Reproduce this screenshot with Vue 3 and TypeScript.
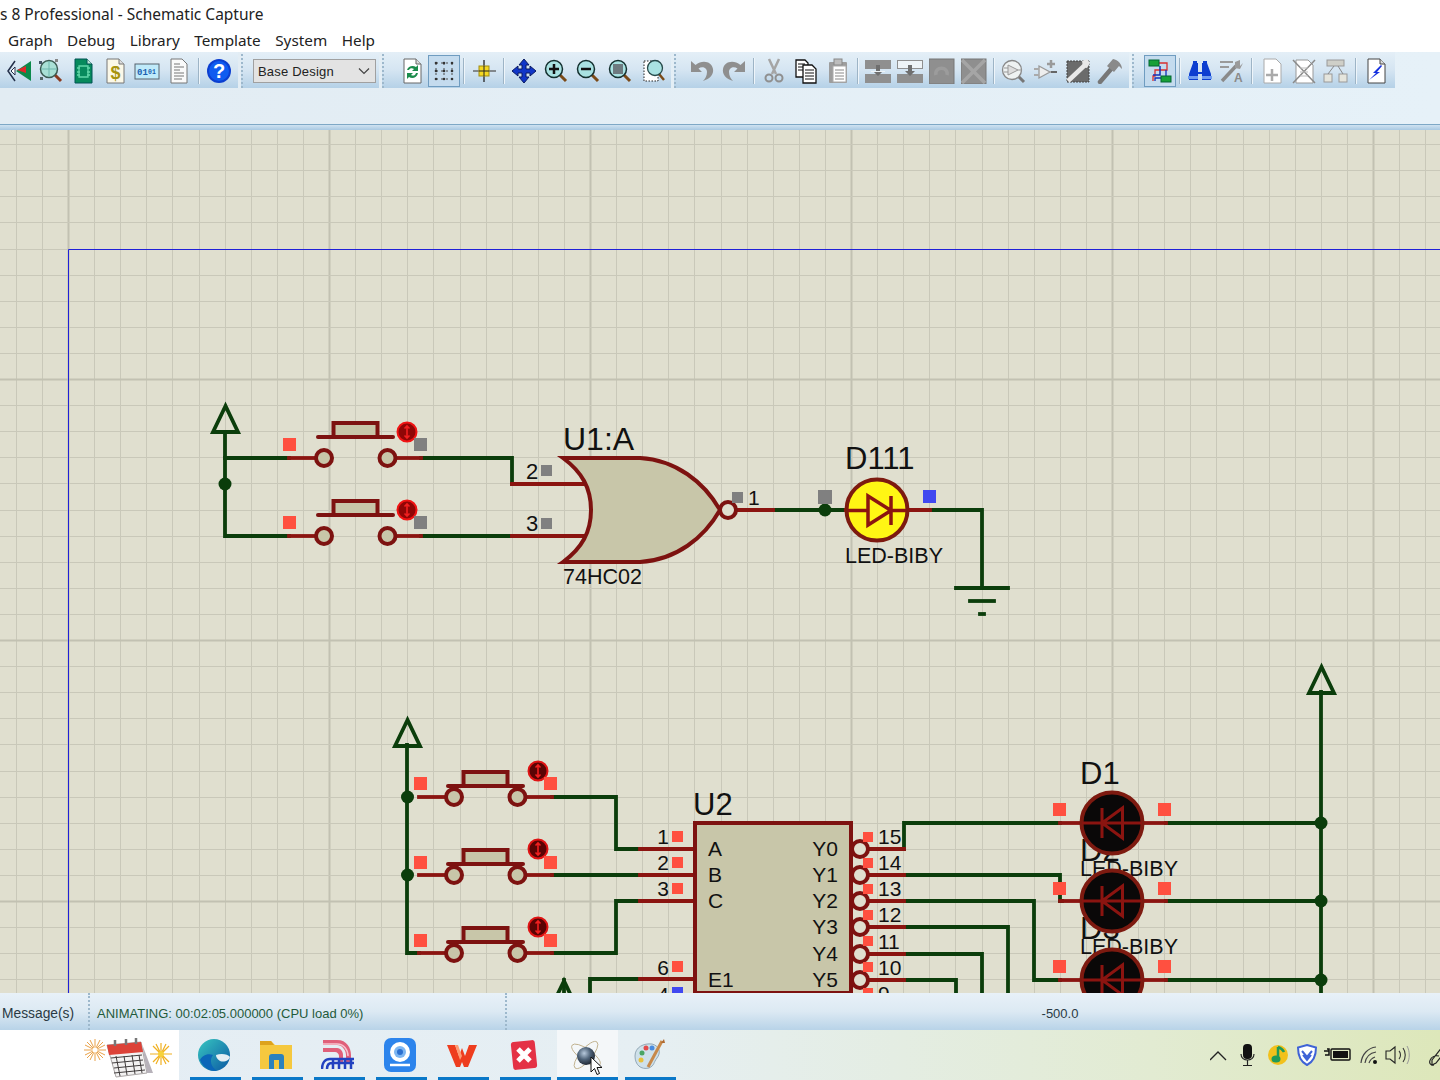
<template>
  <div class="window">
    <div class="title-bar">s 8 Professional - Schematic Capture</div>
    <nav class="menu-bar">
      <span v-for="m in menus" :key="m">{{ m }}</span>
    </nav>
    <div class="tool-area">
      <div class="tool-row">
        <div v-for="(bar, b) in toolbars" :key="b" class="toolbar">
          <span v-if="bar.grip" class="grip" :style="{ width: bar.grip + 'px' }"></span>
          <template v-for="(item, i) in bar.items" :key="i">
            <span v-if="item === 'sep'" class="sep"></span>
            <span v-else-if="item === 'gap'" class="gap"></span>
            <div v-else-if="item === 'combo'" class="combo">
              <span>Base Design</span>
              <svg width="12" height="8" viewBox="0 0 12 8"><path d="M1 1.5 6 6.5 11 1.5" fill="none" stroke="#444" stroke-width="1.2" /></svg>
            </div>
            <span v-else class="tool" :class="{ active: item === 'grid' || item === 'netlist' }">
              <svg width="26" height="26" viewBox="0 0 26 26" v-html="icons[item]"></svg>
            </span>
          </template>
        </div>
      </div>
    </div>
    <div class="rule"></div>

    <main class="canvas">
      <svg class="sheet" width="1440" height="863" viewBox="0 130 1440 863">
        <line v-for="x in gridX" :key="'x' + x.p" :x1="x.p" :x2="x.p" y1="130" y2="993" :class="x.major ? 'g-major' : 'g-minor'" />
        <line v-for="y in gridY" :key="'y' + y.p" x1="0" x2="1440" :y1="y.p" :y2="y.p" :class="y.major ? 'g-major' : 'g-minor'" />
        <path d="M68.5 993V249.5H1440" class="border" />

        <text v-for="t in behindLabels" :key="t.s + t.y" :x="t.x" :y="t.y" :font-size="t.size" class="lbl">{{ t.s }}</text>

        <polyline v-for="(p, i) in greenWires" :key="'g' + i" :points="p" class="wire green" />
        <polyline v-for="(p, i) in redWires" :key="'r' + i" :points="p" class="wire red" />
        <path v-for="(a, i) in arrows" :key="'a' + i" :d="`M${a.x} ${a.y}l-12.500 26h25z`" class="arrow" />
        <circle v-for="(j, i) in junctions" :key="'j' + i" :cx="j[0]" :cy="j[1]" r="6.500" class="junction" />

        <g v-for="(s, i) in switches" :key="'s' + i">
          <path :d="`M${s.x - 6} ${s.y - s.lift}h75`" class="pin" />
          <rect :x="s.x + 9.500" :y="s.y - s.lift - 14" width="44" height="14" class="body" />
          <circle :cx="s.x" :cy="s.y" r="8" class="body" />
          <circle :cx="s.x + 63.500" :cy="s.y" r="8" class="body" />
        </g>
        <g v-for="(k, i) in knobs" :key="'k' + i">
          <circle :cx="k.x" :cy="k.y" r="9.500" :class="k.dark ? 'knob-dark' : 'knob'" />
          <path :d="`M${k.x} ${k.y - 6}v12M${k.x - 2.500} ${k.y - 3.500}l2.500-2.500 2.500 2.500M${k.x - 2.500} ${k.y + 3.500}l2.500 2.500 2.500-2.500`" class="knob-mark" />
        </g>

        <path d="M563 458H640C676 460 704 482 720 510C704 538 676 560 640 562H563C582 548 591 532 591 510C591 488 582 472 563 458Z" class="body" />
        <circle cx="728" cy="510" r="8" class="bubble" />
        <path d="M695 823H851V993H695Z" class="body" />
        <circle v-for="y in bubblesY" :key="'b' + y" cx="860" :cy="y" r="8" class="bubble" />

        <g>
          <circle cx="877" cy="510" r="30.500" class="led-on" />
          <path d="M868 496 891 510.500 868 525ZM891 496V525M848 510.500H868M891 510.500H906" class="diode" />
          <circle v-for="y in [823, 901, 980]" :key="'l' + y" cx="1112" :cy="y" r="30.500" class="led-off" />
          <path v-for="y in [823, 901, 980]" :key="'d' + y" :d="`M1122.500 ${y - 15}V${y + 15}L1102 ${y}ZM1102 ${y - 15}V${y + 15}M1082 ${y}H1142`" class="diode thin" />
        </g>

        <rect v-for="(q, i) in markers" :key="'m' + i" :x="q.x" :y="q.y" :width="q.s" :height="q.s" :fill="q.c" />
        <text v-for="t in labels" :key="t.s + t.x + t.y" :x="t.x" :y="t.y" :font-size="t.size" :text-anchor="t.end ? 'end' : 'start'" class="lbl">{{ t.s }}</text>
      </svg>
    </main>

    <footer class="status-bar">
      <span class="msg">Message(s)</span>
      <span class="grip status-grip"></span>
      <span class="anim">ANIMATING: 00:02:05.000000 (CPU load 0%)</span>
      <span class="grip status-grip second"></span>
      <span class="coord">-500.0</span>
    </footer>

    <div class="taskbar">
      <div class="task-start">
        <svg width="90" height="44" viewBox="0 0 90 44">
          <g stroke="#e9a24a" stroke-width="1">
            <path d="M12 4V26M1 15H23M4 7 20 23M20 7 4 23M7 5 17 25M17 5 7 25M2 10 22 20M22 10 2 20" />
          </g>
          <circle cx="12" cy="15" r="2.500" fill="#fff" />
          <g stroke="#f0b020" stroke-width="1.200">
            <path d="M78 8V30M67 19H89M70 11 86 27M86 11 70 27M73 9 83 29M83 9 73 29" />
          </g>
          <circle cx="78" cy="19" r="3" fill="#f6d23c" />
          <path d="M24 10 58 7 64 38 33 42Z" fill="#f3f2f2" stroke="#a9a4a4" />
          <path d="M24 10 58 7 60 17 26 20Z" fill="#dc4238" />
          <path d="M59 9 70 38H64Z" fill="#b7b2ba" />
          <path d="M28 23 59 20M29 28 60 25M31 33 61 30M31 38 62 35M33 21 37 41M41 21 44 40M49 20 52 39M56 20 59 38" stroke="#403c3c" stroke-width="1" fill="none" />
          <path d="M32 11V5M43 10V4M53 9V3" stroke="#777" stroke-width="2.500" fill="none" />
        </svg>
      </div>
      <div class="task-apps">
        <span v-for="app in apps" :key="app" class="app" :class="app">
          <svg width="34" height="34" viewBox="0 0 34 34" v-html="appIcons[app]"></svg>
        </span>
      </div>
      <div class="tray">
        <svg width="230" height="26" viewBox="0 0 230 26">
          <path d="M0 18 8 10 16 18" fill="none" stroke="#222" stroke-width="1.300" />
          <rect x="33" y="2" width="9" height="15" rx="4" fill="#111" />
          <path d="M31 12C31 20 44 20 44 12M37.500 18V23M33 23.500H42" fill="none" stroke="#222" stroke-width="1.200" />
          <circle cx="68" cy="13" r="10" fill="#f2c11c" />
          <path d="M68 5V16M68 5C71 6 73 8 74 10" fill="none" stroke="#1f9a58" stroke-width="2.500" />
          <ellipse cx="66" cy="17" rx="4.500" ry="3.500" fill="#1f9a58" />
          <path d="M97 3 106 5.500C106 15 103 20 97 23 91 20 88 15 88 5.500Z" fill="#fff" stroke="#3f63d6" stroke-width="2" />
          <path d="M92 9 97 15 102 9M93 13 97 18 101 13" fill="none" stroke="#3f63d6" stroke-width="2" />
          <rect x="121" y="7" width="19" height="11" rx="1" fill="none" stroke="#111" stroke-width="1.400" />
          <rect x="123" y="9" width="15" height="7" fill="#111" />
          <path d="M114 9H119M115 13H119V7H117" stroke="#111" stroke-width="1.500" fill="none" />
          <path d="M151 21C152 12 158 6 166 5M155 21C156 15 160 11 166 10M159 21C160 18 162 16 165 15" fill="none" stroke="#444" stroke-width="1.200" />
          <circle cx="165" cy="20" r="2" fill="#111" />
          <path d="M176 9H180L185 5V21L180 17H176Z" fill="none" stroke="#222" stroke-width="1.100" />
          <path d="M189 9C191 11 191 15 189 17M193 6C196 10 196 16 193 20" fill="none" stroke="#333" stroke-width="1.100" />
          <path d="M197 4C200 9 200 17 197 22" fill="none" stroke="#999" stroke-width="1" />
          <path d="M222 18 233 4 237 7 226 21 222 23ZM229 14C220 12 216 24 224 23" fill="none" stroke="#222" stroke-width="1.200" />
        </svg>
      </div>
      <svg class="cursor" width="14" height="20" viewBox="0 0 14 20">
        <path d="M1 1V16L4.500 12.500 7 18.500 9.500 17.500 7 11.500H12Z" fill="#fff" stroke="#111" stroke-width="1" />
      </svg>
    </div>
  </div>
</template>

<script setup lang="ts">
interface Label {
  s: string
  x: number
  y: number
  size: number
  end?: boolean
}

const menus = ['Graph', 'Debug', 'Library', 'Template', 'System', 'Help']

const toolbars: { grip: number; items: string[] }[] = [
  { grip: 3, items: ['back', 'zoomGreen', 'chipDoc', 'dollar', 'binary', 'textDoc', 'sep', 'help'] },
  { grip: 12, items: ['combo'] },
  { grip: 14, items: ['refresh', 'grid', 'sep', 'origin', 'sep', 'move', 'zoomIn', 'zoomOut', 'zoomAll', 'gap', 'zoomArea'] },
  { grip: 12, items: ['undo', 'redo', 'sep', 'cut', 'copy', 'paste', 'sep', 'blockCopy', 'blockMove', 'blockRotate', 'blockDelete', 'sep', 'pick', 'device', 'chipTool', 'hammer'] },
  { grip: 12, items: ['netlist', 'sep', 'find', 'autoName', 'sep', 'newSheet', 'delSheet', 'tree', 'sep', 'bolt'] }
]

const teal = '#a9e2e2'
const lens = (fill: string, inner: string, edge = '#14302f', handle = '#7a4a18') =>
  `<path d="M17 17l6 6" stroke="${handle}" stroke-width="3"/><circle cx="11" cy="11" r="8.500" fill="${fill}" stroke="${edge}" stroke-width="1.500"/>${inner}`
const gray = '#8f8f8f'

const icons: Record<string, string> = {
  back: `<path d="M9 3 2 13 9 23" fill="none" stroke="#24304a" stroke-width="1.500"/><path d="M5 13 9 9V17Z" fill="#fff" stroke="#24304a"/><path d="M10 13 25 3V23Z" fill="#0b8a4b"/><path d="M11 12 20 8V15Z" fill="#e0282a"/>`,
  zoomGreen: lens('#a9e0d6', `<path d="M11 3V19M3 11H19" stroke="#6fb7ae"/><rect x="1" y="3" width="3" height="3" fill="#456"/><rect x="17" y="1" width="3" height="3" fill="#888"/><rect x="2" y="19" width="3" height="3" fill="#566"/>`, '#3b5a52', '#8a3a20'),
  chipDoc: `<path d="M5 1H17L22 6V25H5Z" fill="#078a5c" stroke="#055"/><path d="M17 1V6H22" fill="#bfe6d6" stroke="#055"/><path d="M9 8H18V19H9ZM7 10H10M7 14H10M7 17H10M17 10H20M17 14H20M17 17H20" fill="none" stroke="#62d6a8" stroke-width="1.300"/>`,
  dollar: `<path d="M5 1H17L22 6V25H5Z" fill="#fbf8e8" stroke="#777"/><path d="M17 1V6H22" fill="#ddd" stroke="#777"/><text x="13.500" y="21" font-size="18" font-weight="700" text-anchor="middle" fill="#a89410" font-family="Liberation Sans, sans-serif">$</text>`,
  binary: `<rect x="1" y="6" width="24" height="15" fill="#bfeafa" stroke="#56626c"/><text x="3" y="17" font-size="9" font-weight="700" fill="#1a5fb0" font-family="Liberation Mono, monospace">01</text><text x="14" y="16" font-size="6.500" font-weight="700" fill="#1a5fb0" font-family="Liberation Mono, monospace">01</text>`,
  textDoc: `<path d="M5 1H16L21 6V25H5Z" fill="#fafafa" stroke="#777"/><path d="M8 6H14M8 9H18M8 12H14M8 15H18M8 18H18M8 21H16" stroke="#777"/>`,
  help: `<circle cx="13" cy="13" r="12" fill="#0b3ed0"/><circle cx="13" cy="13" r="10" fill="#0f5cf0"/><text x="13" y="20" font-size="20" font-weight="700" text-anchor="middle" fill="#fff" font-family="Liberation Sans, sans-serif">?</text>`,
  refresh: `<path d="M5 1H17L22 6V25H5Z" fill="#fff" stroke="#666"/><path d="M17 1V6H22" fill="#ddd" stroke="#666"/><path d="M8 12C9 8 14 7 17 9L19 7V13H13L15 11C13 10 11 10 10 12ZM19 15C18 20 13 21 10 19L8 21V15H14L12 17C14 18 16 18 17 15Z" fill="#1c8c4c"/>`,
  grid: `<g stroke="#4d4d4d" fill="#444"><path d="M5 5H21M5 13H21M5 21H21M5 5V21M13 5V21M21 5V21" stroke-dasharray="2 3" stroke-width="1"/></g><g fill="#333"><circle cx="5" cy="5" r="1.300"/><circle cx="13" cy="5" r="1.300"/><circle cx="21" cy="5" r="1.300"/><circle cx="5" cy="13" r="1.300"/><circle cx="13" cy="13" r="1.300"/><circle cx="21" cy="13" r="1.300"/><circle cx="5" cy="21" r="1.300"/><circle cx="13" cy="21" r="1.300"/><circle cx="21" cy="21" r="1.300"/></g>`,
  origin: `<path d="M13 2V24" stroke="#222" stroke-width="1.300"/><path d="M2 13H25" stroke="#555" stroke-width="1.300"/><rect x="8" y="8" width="10" height="10" fill="#f5d820" stroke="#a08c14"/><path d="M13 8V18M8 13H18" stroke="#222"/>`,
  move: `<path d="M13 1 18 7H15V11H19V8L25 13 19 18V15H15V19H18L13 25 8 19H11V15H7V18L1 13 7 8V11H11V7H8Z" fill="#1136c8" stroke="#0a1a60"/>`,
  zoomIn: lens(teal, `<path d="M11 6V16M6 11H16" stroke="#111" stroke-width="2.500"/>`),
  zoomOut: lens(teal, `<path d="M6 11H16" stroke="#111" stroke-width="2.500"/>`),
  zoomAll: lens(teal, `<rect x="6" y="6" width="10" height="10" fill="#6e7a80"/>`),
  zoomArea: `<rect x="3" y="3" width="14" height="20" fill="#fff" stroke="#222" stroke-dasharray="1.500 1.500"/><path d="M18 16l5 6" stroke="#7a4a18" stroke-width="2.500"/><circle cx="14" cy="10" r="7.500" fill="${teal}" stroke="#26494a" stroke-width="1.300"/>`,
  undo: `<path d="M2 3V14H13L9.500 10.500C13 8 18 9.500 18 14 18 18 16 21 14 23 21 21 25 16 24 11 23 4 14 1 6.500 7Z" fill="${gray}"/>`,
  redo: `<path d="M24 3V14H13L16.500 10.500C13 8 8 9.500 8 14 8 18 10 21 12 23 5 21 1 16 2 11 3 4 12 1 19.500 7Z" fill="${gray}"/>`,
  cut: `<path d="M8 1 15 16M18 1 11 16" stroke="#a5a5a5" stroke-width="2.500"/><circle cx="8" cy="20" r="3.500" fill="none" stroke="${gray}" stroke-width="2"/><circle cx="18" cy="20" r="3.500" fill="none" stroke="${gray}" stroke-width="2"/>`,
  copy: `<path d="M3 2H12L15 5V19H3Z" fill="#fff" stroke="#111" stroke-width="1.300"/><path d="M5 6H12M5 9H12M5 12H12" stroke="#111"/><path d="M10 7H19L23 11V25H10Z" fill="#fff" stroke="#111" stroke-width="1.300"/><path d="M12 12H21M12 15H21M12 18H21M12 21H21" stroke="#111"/>`,
  paste: `<rect x="4" y="4" width="18" height="21" rx="1" fill="#9d9d9d"/><rect x="9" y="1" width="8" height="6" fill="#bdbdbd" stroke="#888"/><path d="M8 8H21V24H8Z" fill="#fff" stroke="#aaa"/><path d="M10 12H19M10 15H19M10 18H19M10 21H19" stroke="#888"/>`,
  blockCopy: `<rect y="2" width="26" height="9" fill="${gray}"/><rect y="16" width="26" height="9" fill="${gray}"/><path d="M11 7H15V13H18L13 18 8 13H11Z" fill="#6f6f6f"/><path d="M6 13.500H20" stroke="#eef3f6"/>`,
  blockMove: `<rect x=".5" y="2.500" width="25" height="8" fill="#eef3f6" stroke="${gray}"/><rect y="16" width="26" height="9" fill="${gray}"/><path d="M11 7H15V13H18L13 18 8 13H11Z" fill="#6f6f6f"/>`,
  blockRotate: `<rect y="1" width="25" height="25" fill="${gray}" stroke="#777"/><path d="M7 17C5 8 20 8 18 17" fill="none" stroke="#9c9c9c" stroke-width="3.500"/>`,
  blockDelete: `<rect y="1" width="25" height="25" fill="${gray}" stroke="#777"/><path d="M1 2 24 25M24 2 1 25" stroke="#a5a5a5" stroke-width="3.500"/>`,
  pick: `<path d="M17 18l6 6" stroke="#777" stroke-width="3"/><circle cx="11" cy="12" r="9.500" fill="#eef2f2" stroke="#888" stroke-width="1.300"/><path d="M7 7V17L17 12Z" fill="#ddd" stroke="#999"/><path d="M3 10H7M3 14H7M17 12H21" stroke="#999"/>`,
  device: `<path d="M6 8V20L17 14Z" fill="#eee" stroke="#999" stroke-width="1.300"/><path d="M1 11H6M1 17H6M17 14H22" stroke="#aaa" stroke-width="2"/><path d="M18 2V10M14 6H22" stroke="#9a9a9a" stroke-width="2.500"/><path d="M18 14H24" stroke="#666" stroke-width="2"/>`,
  chipTool: `<rect x="2" y="3" width="22" height="21" fill="#6b6b6b" stroke-dasharray="2 1" stroke="#444"/><path d="M3 23 20 7" stroke="#e8e8e8" stroke-width="4.500"/><path d="M17 3 22 1 25 5 22 10 18 9Z" fill="#e8e8e8"/>`,
  hammer: `<path d="M3 24 15 10" stroke="#777" stroke-width="4.500" stroke-linecap="round"/><path d="M10 8 16 1C21 2 25 6 25 11L22 8 17 14Z" fill="#8a8a8a"/>`,
  netlist: `<path d="M9 5H20V12H8V18H6V23" fill="none" stroke="#d83030" stroke-width="1.300"/><path d="M13 8V17H6" fill="none" stroke="#1130b8" stroke-width="1.500"/><path d="M19 12V20H8V23" fill="none" stroke="#1130b8" stroke-width="1.300"/><rect x="2" y="2" width="10" height="6" fill="#18a038" stroke="#063"/><rect x="14" y="18" width="10" height="6" fill="#18a038" stroke="#063"/>`,
  find: `<path d="M2 16 6 5H11V14H15V5H20L24 16V22H15V16H11V22H2Z" fill="#0d3ed0"/><rect x="1" y="18" width="10" height="3" fill="#6f9cf0"/><rect x="15" y="18" width="10" height="3" fill="#6f9cf0"/><rect x="6" y="3" width="4" height="3" fill="#0d3ed0"/><rect x="16" y="3" width="4" height="3" fill="#0d3ed0"/>`,
  autoName: `<path d="M1 4H14M1 9H10" stroke="#9a9a9a" stroke-width="2"/><path d="M3 23 17 8" stroke="#8a8a8a" stroke-width="3.500"/><path d="M16 4 21 2 21 8 24 5 21 11 16 10Z" fill="#9a9a9a"/><text x="15" y="24" font-size="12" font-weight="700" fill="#8a8a8a" font-family="Liberation Sans, sans-serif">A</text>`,
  newSheet: `<path d="M5 1H17L22 6V25H5Z" fill="#fff" stroke="#aaa"/><path d="M13 11V23M7 17H19" stroke="#aaa" stroke-width="2.500"/>`,
  delSheet: `<path d="M5 2H17L22 7V25H5Z" fill="#fff" stroke="#999"/><path d="M2 2 24 25M24 2 2 25" stroke="#8a8a8a" stroke-width="1.500"/><path d="M9 10H17M9 14H17M9 18H17" stroke="#bbb"/>`,
  tree: `<rect x="4" y="2" width="17" height="6" fill="#cfcfc8" stroke="#999"/><rect x="1" y="16" width="8" height="8" fill="#e5e5dd" stroke="#999"/><rect x="16" y="16" width="8" height="8" fill="#e5e5dd" stroke="#999"/><path d="M11 8 5 16M15 8 20 16" stroke="#888"/>`,
  bolt: `<path d="M5 1H17L22 6V25H5Z" fill="#fff" stroke="#444"/><path d="M17 1V6H22" fill="#ddd" stroke="#444"/><path d="M18 7 10 15H13L6 22 17 14H14L19 8Z" fill="#1530e0"/>`
}

const apps = ['edge', 'folder', 'rails', 'cam', 'wps', 'xmind', 'atom', 'paint']

const appIcons: Record<string, string> = {
  edge: `<defs><linearGradient id="edgeG" x1="0" y1="0" x2="1" y2="1"><stop offset="0" stop-color="#37c6c0"/><stop offset="1" stop-color="#0c59a4"/></linearGradient></defs><circle cx="17" cy="17" r="16" fill="url(#edgeG)"/><path d="M19 17C24 15 31 16 33 19 31 24 26 24 23 23 20 21 19 19 19 17Z" fill="#e4eef3"/><path d="M3 22C6 30 13 33 20 33 14 29 12 22 16 17 10 15 5 18 3 22Z" fill="#0b66b8"/>`,
  folder: `<path d="M1 8V5C1 3 2 3 3 3H12L16 7H33V31H1Z" fill="#f5c83f"/><path d="M1 3H12L15 7H1Z" fill="#dda21d"/><path d="M10 31V19C10 17 11 16 13 16H22C24 16 25 17 25 19V31H20V22H15V31Z" fill="#2c81bd"/>`,
  rails: `<path d="M2 2H16C26 2 30 10 30 17V26H25V17C25 12 21 7 16 7H2ZM2 10H16C20 10 22 14 22 17V26H18V18C18 16 16 14 14 14H2Z" fill="#e0607a"/><path d="M2 6H16C23 6 27 12 27 18" fill="none" stroke="#f7c3cf" stroke-width="1.500"/><path d="M1 31C1 25 4 21 9 21H33M6 31C6 27 8 25 11 25H33M12 31V21M18 31V21M24 31V21M30 31V21" fill="none" stroke="#2242c0" stroke-width="2.500"/>`,
  cam: `<rect x="1" y="0" width="32" height="34" rx="7" fill="#2c84ec"/><circle cx="17" cy="14" r="10" fill="#fff"/><circle cx="17" cy="14" r="6" fill="#7db6f2"/><circle cx="17" cy="14" r="3" fill="#2c70d0"/><path d="M7 27H27" stroke="#fff" stroke-width="2.500"/>`,
  wps: `<path d="M2 7H10L14 18 17 10 20 18 24 7H32L23 29H19L17 24 15 29H11Z" fill="#ee3d1e"/><path d="M10 7H13L17 18 15 22Z" fill="#ff9b73"/>`,
  xmind: `<rect x="5" y="3" width="24" height="28" rx="3" fill="#e43145" transform="rotate(-6 17 17)"/><path d="M11 11 23 23M23 11 11 23" stroke="#fff" stroke-width="5"/>`,
  atom: `<defs><radialGradient id="atomG" cx=".4" cy=".35" r=".7"><stop offset="0" stop-color="#b7c9dc"/><stop offset=".5" stop-color="#4e6278"/><stop offset="1" stop-color="#19202c"/></radialGradient></defs><g fill="none" stroke="#b9a77f" stroke-width=".8"><ellipse cx="17" cy="17" rx="17" ry="6" transform="rotate(35 17 17)"/><ellipse cx="17" cy="17" rx="17" ry="6" transform="rotate(-50 17 17)"/></g><circle cx="17" cy="18" r="9" fill="url(#atomG)"/>`,
  paint: `<path d="M3 18C3 9 12 5 20 6 28 8 29 15 25 20 21 25 23 27 17 30 9 32 3 27 3 18Z" fill="#cfe1ea" stroke="#93a8b6"/><circle cx="10" cy="15" r="2.500" fill="#4aa564"/><circle cx="14" cy="10" r="2.500" fill="#e24c4c"/><circle cx="20" cy="10" r="2.500" fill="#4a8ce0"/><circle cx="9" cy="22" r="2.500" fill="#e8c13c"/><path d="M16 29 30 3" stroke="#c7894a" stroke-width="3"/><path d="M29 5 32 1 33 5Z" fill="#b06a30"/>`
}

const step = 26.1
const gridX = Array.from({ length: 56 }, (_, i) => ({
  p: Math.round(15.8 + i * step) + 0.5,
  major: (i - 2) % 10 === 0
}))
const gridY = Array.from({ length: 34 }, (_, i) => ({
  p: Math.round(144.1 + i * step) + 0.5,
  major: (i - 9) % 10 === 0
}))

const greenWires = [
  '225,432 225,536 289,536',
  '225,458 289,458',
  '421,458 512,458 512,484',
  '421,536 512,536',
  '773,510 846,510',
  '930,510 982,510 982,588',
  '956,588 1008,588',
  '970,601 994,601',
  '980,614 984,614',
  '407,745 407,953 419,953',
  '552,797 616,797 616,849 640,849',
  '552,875 640,875',
  '552,953 616,953 616,901 640,901',
  '590,993 590,979 640,979',
  '564,980 564,993',
  '904,849 904,823 1060,823',
  '904,875 1060,875 1060,901 1062,901',
  '904,901 1034,901 1034,980 1060,980',
  '904,927 1008,927 1008,993',
  '904,954 982,954 982,993',
  '904,980 956,980 956,993',
  '1166,823 1321,823',
  '1166,901 1321,901',
  '1166,980 1321,980',
  '1321,692 1321,993'
]

const redWires = [
  '289,458 316,458', '396,458 421,458',
  '289,536 316,536', '396,536 421,536',
  '512,484 587,484', '512,536 587,536',
  '736,510 773,510', '846,510 930,510',
  '419,797 446,797', '525,797 552,797',
  '419,875 446,875', '525,875 552,875',
  '419,953 446,953', '525,953 552,953',
  '640,849 695,849', '640,875 695,875', '640,901 695,901', '640,979 695,979',
  '868,849 904,849', '868,875 904,875', '868,901 904,901', '868,927 904,927', '868,954 904,954', '868,980 904,980',
  '1060,823 1085,823', '1060,901 1085,901', '1060,980 1085,980',
  '1140,823 1166,823', '1140,901 1166,901', '1140,980 1166,980'
]

const arrows = [
  { x: 225.5, y: 406 },
  { x: 407.5, y: 720 },
  { x: 1321.5, y: 667 },
  { x: 564, y: 981 }
]

const junctions = [
  [225, 484], [825, 510], [407.5, 797], [407.5, 875], [1321, 823], [1321, 901], [1321, 980]
]

const switches = [
  { x: 324, y: 458, lift: 21 },
  { x: 324, y: 536, lift: 21 },
  { x: 454, y: 797, lift: 11 },
  { x: 454, y: 875, lift: 11 },
  { x: 454, y: 953, lift: 11 }
]

const knobs = [
  { x: 407, y: 432, dark: false },
  { x: 407, y: 510, dark: false },
  { x: 538, y: 771, dark: true },
  { x: 538, y: 849, dark: true },
  { x: 538, y: 927, dark: true }
]

const bubblesY = [849, 875, 901, 927, 954, 980]

const hot = '#ff5040'
const grey = '#808080'
const blue = '#4048f0'

const markers = [
  { x: 283, y: 438, s: 13, c: hot }, { x: 283, y: 516, s: 13, c: hot },
  { x: 414, y: 438, s: 13, c: grey }, { x: 414, y: 516, s: 13, c: grey },
  { x: 541, y: 465, s: 11, c: grey }, { x: 541, y: 518, s: 11, c: grey },
  { x: 732, y: 492, s: 11, c: grey }, { x: 818, y: 490, s: 14, c: grey }, { x: 923, y: 490, s: 13, c: blue },
  { x: 414, y: 777, s: 13, c: hot }, { x: 544, y: 777, s: 13, c: hot },
  { x: 414, y: 856, s: 13, c: hot }, { x: 544, y: 856, s: 13, c: hot },
  { x: 414, y: 934, s: 13, c: hot }, { x: 544, y: 934, s: 13, c: hot },
  { x: 672, y: 831, s: 11, c: hot }, { x: 672, y: 857, s: 11, c: hot }, { x: 672, y: 883, s: 11, c: hot },
  { x: 672, y: 961, s: 11, c: hot }, { x: 672, y: 987, s: 11, c: blue },
  { x: 863, y: 832, s: 10, c: hot }, { x: 863, y: 858, s: 10, c: hot }, { x: 863, y: 884, s: 10, c: hot },
  { x: 863, y: 910, s: 10, c: hot }, { x: 863, y: 936, s: 10, c: hot }, { x: 863, y: 962, s: 10, c: hot }, { x: 863, y: 988, s: 10, c: hot },
  { x: 1053, y: 803, s: 13, c: hot }, { x: 1158, y: 803, s: 13, c: hot },
  { x: 1053, y: 882, s: 13, c: hot }, { x: 1158, y: 882, s: 13, c: hot },
  { x: 1053, y: 960, s: 13, c: hot }, { x: 1158, y: 960, s: 13, c: hot }
]

const behindLabels: Label[] = [
  { s: 'D2', x: 1080, y: 861, size: 31 },
  { s: 'D3', x: 1080, y: 939, size: 31 },
  { s: 'LED-BIBY', x: 1080, y: 876, size: 21.5 },
  { s: 'LED-BIBY', x: 1080, y: 954, size: 21.5 }
]

const labels: Label[] = [
  { s: 'U1:A', x: 563, y: 450, size: 32 },
  { s: '2', x: 526, y: 479, size: 22 },
  { s: '3', x: 526, y: 531, size: 22 },
  { s: '1', x: 748, y: 505, size: 21 },
  { s: '74HC02', x: 563, y: 584, size: 21.5 },
  { s: 'D111', x: 845, y: 469, size: 31 },
  { s: 'LED-BIBY', x: 845, y: 563, size: 21.5 },
  { s: 'U2', x: 693, y: 815, size: 31 },
  { s: '1', x: 669, y: 844, size: 21, end: true },
  { s: '2', x: 669, y: 870, size: 21, end: true },
  { s: '3', x: 669, y: 896, size: 21, end: true },
  { s: '6', x: 669, y: 975, size: 21, end: true },
  { s: '4', x: 669, y: 1002, size: 21, end: true },
  { s: 'A', x: 708, y: 856, size: 21 },
  { s: 'B', x: 708, y: 882, size: 21 },
  { s: 'C', x: 708, y: 908, size: 21 },
  { s: 'E1', x: 708, y: 987, size: 21 },
  { s: 'Y0', x: 838, y: 856, size: 21, end: true },
  { s: 'Y1', x: 838, y: 882, size: 21, end: true },
  { s: 'Y2', x: 838, y: 908, size: 21, end: true },
  { s: 'Y3', x: 838, y: 934, size: 21, end: true },
  { s: 'Y4', x: 838, y: 961, size: 21, end: true },
  { s: 'Y5', x: 838, y: 987, size: 21, end: true },
  { s: '15', x: 878, y: 844, size: 21 },
  { s: '14', x: 878, y: 870, size: 21 },
  { s: '13', x: 878, y: 896, size: 21 },
  { s: '12', x: 878, y: 922, size: 21 },
  { s: '11', x: 878, y: 949, size: 21 },
  { s: '10', x: 878, y: 975, size: 21 },
  { s: '9', x: 878, y: 1001, size: 21 },
  { s: 'D1', x: 1080, y: 784, size: 31 }
]
</script>

<style>
html,
body {
  margin: 0;
  background: #fff;
}
</style>

<style scoped>
.window {
  width: 1440px;
  height: 1080px;
  display: flex;
  flex-direction: column;
  overflow: hidden;
  position: relative;
  font-family: 'Noto Sans', 'Liberation Sans', sans-serif;
  color: #222;
}

.title-bar {
  height: 28px;
  line-height: 28px;
  font-size: 15.5px;
  background: #fff;
  white-space: nowrap;
}

.menu-bar {
  height: 24px;
  display: flex;
  gap: 14.5px;
  padding-left: 8px;
  line-height: 25px;
  font-size: 15.3px;
  background: #fff;
}

.tool-area {
  height: 72px;
  background: linear-gradient(90deg, #e2ecf3, #e6f1f8);
}

.tool-row {
  display: flex;
  gap: 3px;
  height: 36px;
}

.toolbar {
  display: flex;
  align-items: center;
  box-sizing: border-box;
  height: 36px;
  padding: 2px 3px 0 0;
  background: linear-gradient(180deg, #e4eff7 0%, #d5e5f2 50%, #b5d1e7 100%);
}

.toolbar:nth-child(3) {
  padding-right: 1px;
}

.grip {
  display: block;
  align-self: stretch;
  flex: none;
  box-sizing: border-box;
  border-left: 2px dotted #9db8cc;
  background-clip: padding-box;
}

.toolbar:first-child .grip {
  border: 0;
}

.tool {
  width: 32px;
  height: 32px;
  flex: none;
  display: flex;
  align-items: center;
  justify-content: center;
  box-sizing: border-box;
}

.tool.active {
  background: #c4dbee;
  border: 1px solid #6f9cc0;
}

.sep {
  width: 8px;
  height: 26px;
  flex: none;
  position: relative;
}

.sep::after {
  content: '';
  position: absolute;
  left: 3px;
  top: 0;
  bottom: 0;
  width: 1px;
  background: #9db4c6;
  box-shadow: 1px 0 0 #eef5fa;
}

.gap {
  width: 2px;
  flex: none;
}

.combo {
  width: 123px;
  height: 24px;
  box-sizing: border-box;
  display: flex;
  align-items: center;
  justify-content: space-between;
  padding: 0 5px 0 4px;
  background: #e3e3e3;
  border: 1px solid #a0a0a0;
  font: 13px 'Liberation Sans', sans-serif;
  letter-spacing: 0.2px;
  color: #222;
}

.rule {
  height: 6px;
  border-top: 1px solid #7ea8c6;
  box-sizing: border-box;
  background: linear-gradient(180deg, #cfe2f1, #a9c9e2);
}

.canvas {
  height: 863px;
  flex: none;
  overflow: hidden;
  background: #e0dfcf;
}

.sheet {
  display: block;
}

.g-minor {
  stroke: #c9c8b9;
  stroke-width: 1;
}

.g-major {
  stroke: #c2c1b2;
  stroke-width: 2;
}

.border {
  fill: none;
  stroke: #2020d8;
  stroke-width: 1;
}

.wire {
  fill: none;
  stroke-width: 3.800;
  stroke-linecap: square;
  stroke-linejoin: miter;
}

.green {
  stroke: #0b3d0b;
}

.red {
  stroke: #8b1410;
}

.arrow {
  fill: none;
  stroke: #0b3d0b;
  stroke-width: 3.800;
}

.junction {
  fill: #0b3d0b;
}

.pin {
  fill: none;
  stroke: #7d1210;
  stroke-width: 4;
  stroke-linecap: round;
}

.body {
  fill: #c8c6a9;
  stroke: #7d1210;
  stroke-width: 4;
}

.bubble {
  fill: #e0dfcf;
  stroke: #7d1210;
  stroke-width: 4;
}

.led-on {
  fill: #fff614;
  stroke: #7d1a10;
  stroke-width: 4;
}

.led-off {
  fill: #0a0808;
  stroke: #7d1a10;
  stroke-width: 4;
}

.diode {
  fill: none;
  stroke: #8b1410;
  stroke-width: 3.500;
}

.diode.thin {
  stroke-width: 3;
}

.knob {
  fill: #8f0606;
  stroke: #f01414;
  stroke-width: 2;
}

.knob-dark {
  fill: #5a0404;
  stroke: #e01414;
  stroke-width: 2;
}

.knob-mark {
  fill: none;
  stroke: #f02020;
  stroke-width: 1.600;
}

.lbl {
  font-family: 'Liberation Sans', sans-serif;
  fill: #111;
}

.status-bar {
  height: 37px;
  flex: none;
  display: flex;
  align-items: center;
  font: 13px 'Liberation Sans', sans-serif;
  color: #2a3a44;
  background: linear-gradient(180deg, #e8f1f8 0%, #dce9f3 50%, #b8d3e8 100%);
}

.msg {
  width: 86px;
  padding: 4px 0 0 2px;
  flex: none;
  font-size: 13.8px;
}

.status-grip {
  width: 9px;
  height: 37px;
}

.anim {
  width: 398px;
  padding-top: 4px;
  flex: none;
  color: #1f5a3a;
}

.status-grip.second {
  margin-left: 10px;
}

.coord {
  flex: 1;
  padding-top: 4px;
  text-align: center;
  margin-left: 166px;
}

.taskbar {
  height: 50px;
  flex: none;
  display: flex;
  position: relative;
  background: linear-gradient(90deg, #e4edf4 0%, #e6eff3 45%, #e2ebd2 80%, #dde7ba 100%);
}

.task-start {
  width: 179px;
  flex: none;
  background: #fff;
  display: flex;
  justify-content: flex-end;
  align-items: center;
  box-sizing: border-box;
}

.task-start svg {
  margin: 4px 6px 0 0;
}

.task-apps {
  display: flex;
  align-items: stretch;
  margin-left: 11px;
  gap: 11px;
}

.app {
  width: 51px;
  flex: none;
  display: flex;
  align-items: center;
  justify-content: center;
  box-sizing: border-box;
  padding: 2px 4px 0 0;
  border-bottom: 3px solid #0a78c8;
}

.app.atom {
  width: 61px;
  margin-left: -5px;
  margin-right: -4px;
  background: #f4f7f9;
}

.tray {
  position: absolute;
  left: 1210px;
  top: 12px;
}

.cursor {
  position: absolute;
  left: 590px;
  top: 26px;
}
</style>
